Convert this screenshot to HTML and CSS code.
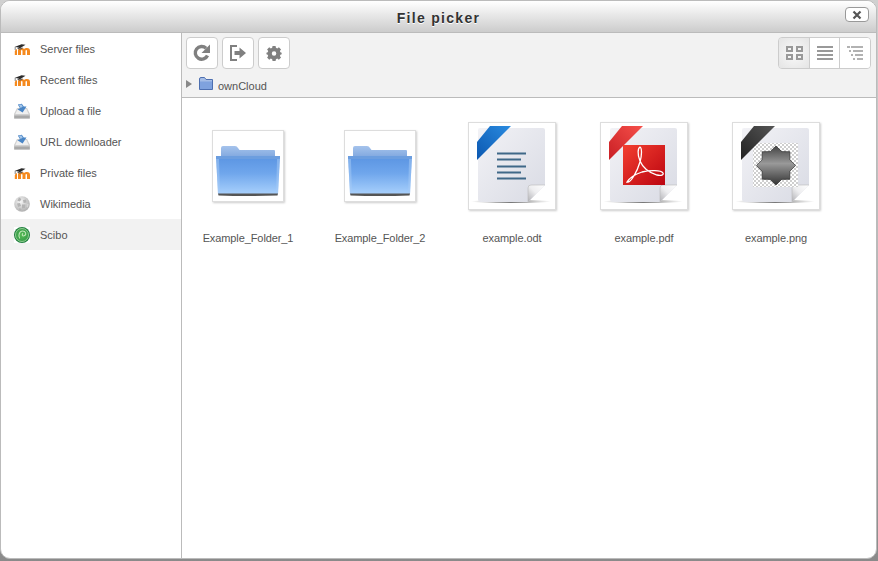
FILE: index.html
```html
<!DOCTYPE html>
<html lang="en">
<head>
    <meta charset="UTF-8">
    <meta name="viewport" content="width=device-width, initial-scale=1.0">
    <title>File picker</title>
    <link rel="stylesheet" href="styles.css">
</head>
<body>

    <svg class="defs" width="0" height="0">
        <defs>
            <linearGradient id="folder-front" x1="0" y1="0" x2="0" y2="1">
                <stop offset="0" stop-color="#5a94e2"/>
                <stop offset="0.45" stop-color="#6fa6ec"/>
                <stop offset="1" stop-color="#a8d0fc"/>
            </linearGradient>
            <linearGradient id="folder-tab" x1="0" y1="0" x2="0" y2="1">
                <stop offset="0" stop-color="#a5c3ec"/>
                <stop offset="1" stop-color="#7ea6de"/>
            </linearGradient>
            <linearGradient id="page" x1="0" y1="0" x2="1" y2="1">
                <stop offset="0" stop-color="#f2f2f6"/>
                <stop offset="1" stop-color="#d9dbe4"/>
            </linearGradient>
            <linearGradient id="fold" x1="0" y1="1" x2="1" y2="0">
                <stop offset="0" stop-color="#b0b0b4"/>
                <stop offset="0.5" stop-color="#eeeef0"/>
                <stop offset="1" stop-color="#fff"/>
            </linearGradient>
            <linearGradient id="under" x1="0" y1="0" x2="1" y2="0">
                <stop offset="0" stop-color="#888" stop-opacity="0"/>
                <stop offset="0.5" stop-color="#777"/>
                <stop offset="1" stop-color="#888" stop-opacity="0"/>
            </linearGradient>
            <linearGradient id="ribbon-blue" x1="0" y1="1" x2="1" y2="0">
                <stop offset="0" stop-color="#0b57b0"/>
                <stop offset="1" stop-color="#2a8be0"/>
            </linearGradient>
            <linearGradient id="ribbon-red" x1="0" y1="1" x2="1" y2="0">
                <stop offset="0" stop-color="#c81e24"/>
                <stop offset="1" stop-color="#f6504a"/>
            </linearGradient>
            <linearGradient id="ribbon-black" x1="0" y1="1" x2="1" y2="0">
                <stop offset="0" stop-color="#222"/>
                <stop offset="1" stop-color="#555"/>
            </linearGradient>
            <linearGradient id="pdf-red" x1="0" y1="0" x2="1" y2="1">
                <stop offset="0" stop-color="#f33f30"/>
                <stop offset="1" stop-color="#bb0510"/>
            </linearGradient>
            <linearGradient id="star" x1="0" y1="0" x2="0" y2="1">
                <stop offset="0" stop-color="#444"/>
                <stop offset="0.45" stop-color="#999"/>
                <stop offset="1" stop-color="#333"/>
            </linearGradient>
            <pattern id="checker" width="4" height="4" patternUnits="userSpaceOnUse">
                <rect width="4" height="4" fill="#fff"/>
                <rect width="2" height="2" fill="#cfcfcf"/>
                <rect x="2" y="2" width="2" height="2" fill="#cfcfcf"/>
            </pattern>
            <radialGradient id="globe" cx="0.4" cy="0.35" r="0.75">
                <stop offset="0" stop-color="#f8f8f8"/>
                <stop offset="1" stop-color="#a6a6a6"/>
            </radialGradient>
            <radialGradient id="green" cx="0.5" cy="0.5" r="0.5">
                <stop offset="0" stop-color="#58bb55"/>
                <stop offset="0.75" stop-color="#3aa04a"/>
                <stop offset="1" stop-color="#17763a"/>
            </radialGradient>

            <symbol id="icon-moodle" viewBox="0 0 16 16">
                <path d="M4 14V9.500Q4 7 7 7H8Q9.500 7 10 8Q11 7 12.500 7H13Q16 7 16 10V14H13V10Q13 9 12.250 9Q11.500 9 11.500 10V14H8.500V10Q8.500 9 7.750 9Q7 9 7 10V14Z" fill="#f58a1f"/>
                <path d="M.8 14V10.500Q.8 8.500 3 8V14Z" fill="#f58a1f"/>
                <path d="M.5 6 7.500 3.200 11.500 3.800 6 7.200 3.500 6.300Z" fill="#2b2b2b"/>
                <path d="M3.500 6.500 6 7.500 8.500 6.200V7.600L6 8.800 3.500 7.800Z" fill="#5a5a5a"/>
                <path d="M1.200 6V9" stroke="#666" stroke-width=".8" fill="none"/>
            </symbol>
            <symbol id="icon-upload" viewBox="0 0 16 16">
                <path d="M3 5H13L16 11V15.500H0V11Z" fill="#d0d0d0"/>
                <path d="M3.600 6H12.400L14.600 11H1.400Z" fill="#efefef"/>
                <path d="M.3 12.500H15.700V15.500H.3Z" fill="#a8a8a8"/>
                <path d="M3.800 1.500 7.800 .8 9.800 3.400 12.500 3.600 8.600 9.600 3.400 6.200 6 5.200Z" fill="#4a86c6"/>
                <path d="M4.800 1.800 7.400 1.400 8.800 3.600 6.600 5Z" fill="#a6c6e8"/>
            </symbol>
            <symbol id="icon-wiki" viewBox="0 0 16 16">
                <circle cx="8" cy="8" r="7.800" fill="url(#globe)"/>
                <path d="M5 1.600 7.400 3 6 5.400 3.400 4.800ZM9 4 12 3.400 12.600 6.400 9.600 7ZM3 7.400 6 7 7 10 4 11ZM8 8.600 11.400 8.400 11 12 8 12.400ZM5.400 12 7.400 13 7 15 5 14.200Z" fill="#b4b4b4"/>
                <path d="M13 8 14.600 8 14 11.600 12.600 11Z" fill="#d4d4d4"/>
            </symbol>
            <symbol id="icon-scibo" viewBox="0 0 16 16">
                <rect width="16" height="16" fill="#fff"/>
                <circle cx="8" cy="8" r="8" fill="url(#green)"/>
                <circle cx="8" cy="8" r="6.500" fill="none" stroke="#a9d9a4" stroke-width=".8"/>
                <path d="M5.800 11.500C3.800 8.800 5.400 4 8.600 4S12.800 7.500 10.600 8.600 7.800 7.800 8.800 6.200" fill="none" stroke="#bfe6b8" stroke-width="1.100"/>
            </symbol>
            <symbol id="icon-folder-thumb" viewBox="1 1 70 70">
                <path d="M9 18Q9 16 11 16H23Q25 16 26 18L27.500 20H62Q63 20 63 21V28H9Z" fill="url(#folder-tab)"/>
                <path d="M4 26H68L66 64H6Z" fill="url(#folder-front)"/>
                <path d="M4 26H68L67.800 29H4.200Z" fill="#6c9edf"/>
                <path d="M4.300 29H7L8 64H6ZM67.700 29H65L64 64H66Z" fill="#a8ccf6" opacity=".5"/>
                <path d="M6 63.500H66L65.500 65.500Q36 66.500 6.500 65.500Z" fill="#555"/>
            </symbol>
            <symbol id="icon-doc" viewBox="1 1 86 86">
                <ellipse cx="43" cy="79.500" rx="40" ry="1.500" fill="url(#under)"/>
                <path d="M12 6H75Q77 6 77 8V63L60 80H13Q10 80 10 77V8Q10 6 12 6Z" fill="url(#page)"/>
                <path d="M60 80V67Q60 63 64 63H77Z" fill="url(#fold)"/>
                <path d="M60 80V66Q60 63 63 63H77" fill="none" stroke="#bbb" stroke-width=".6"/>
            </symbol>
        </defs>
    </svg>

    <div class="dialog">
        <div class="dialog-header">
            <h1>File picker</h1>
            <button class="close-btn">
                <svg width="10" height="10" viewBox="0 0 10 10"><path d="M1.500 1.500 8.500 8.500M8.500 1.500 1.500 8.500" stroke="#555" stroke-width="2.200" fill="none"/></svg>
            </button>
        </div>

        <div class="dialog-body">
            <ul class="sources">
                <li><svg class="source-icon"><use href="#icon-moodle"/></svg>Server files</li>
                <li><svg class="source-icon"><use href="#icon-moodle"/></svg>Recent files</li>
                <li><svg class="source-icon"><use href="#icon-upload"/></svg>Upload a file</li>
                <li><svg class="source-icon"><use href="#icon-upload"/></svg>URL downloader</li>
                <li><svg class="source-icon"><use href="#icon-moodle"/></svg>Private files</li>
                <li><svg class="source-icon"><use href="#icon-wiki"/></svg>Wikimedia</li>
                <li class="active"><svg class="source-icon"><use href="#icon-scibo"/></svg>Scibo</li>
            </ul>

            <div class="main">
                <div class="toolbar">
                    <div class="toolbar-row">
                        <div class="actions">
                            <button class="tool-btn">
                                <svg width="20" height="20" viewBox="0 0 20 20"><path d="M15.500 12.500A6.400 6.400 0 1 1 14.100 5.200" fill="none" stroke="#808080" stroke-width="3.400"/><path d="M18 1.500V10H9.500Z" fill="#808080"/></svg>
                            </button>
                            <button class="tool-btn">
                                <svg width="20" height="20" viewBox="0 0 20 20"><path d="M9 3H3V17H9" fill="none" stroke="#808080" stroke-width="2"/><path d="M6.500 8H11.500V4.500L18 10 11.500 15.500V12H6.500Z" fill="#808080"/></svg>
                            </button>
                            <button class="tool-btn">
                                <svg width="17" height="17" viewBox="1 1 19 19"><path fill="#808080" fill-rule="evenodd" d="M8.300 2H11.700L12.100 4.200 13.600 4.800 15.400 3.500 17.800 5.900 16.500 7.700 17.100 9.200 18.500 9.600V11.400L17.100 11.800 16.500 13.300 17.800 15.100 15.400 17.500 13.600 16.200 12.100 16.800 11.700 19H8.300L7.900 16.800 6.400 16.200 4.600 17.500 2.200 15.100 3.500 13.300 2.900 11.800 1.500 11.400V9.600L2.900 9.200 3.500 7.700 2.200 5.900 4.600 3.500 6.400 4.800 7.900 4.200ZM10 8A2.500 2.500 0 1 0 10 13 2.500 2.500 0 1 0 10 8Z"/></svg>
                            </button>
                        </div>
                        <div class="views">
                            <button class="view-btn selected">
                                <svg width="17" height="14" viewBox="0 0 17 14"><path d="M1 1H6V5H1ZM11 1H16V5H11ZM1 9H6V13H1ZM11 9H16V13H11Z" fill="none" stroke="#999" stroke-width="2"/></svg>
                            </button>
                            <button class="view-btn">
                                <svg width="16" height="14" viewBox="0 0 16 14"><path d="M0 1H16M0 5H16M0 9H16M0 13H16" stroke="#999" stroke-width="2"/></svg>
                            </button>
                            <button class="view-btn">
                                <svg width="16" height="14" viewBox="0 0 16 14"><path d="M0 1H3M4 1H16M2 5H4M6 5H16M4 9H6M8 9H16M6 13H8M10 13H16" stroke="#999" stroke-width="1.600"/></svg>
                            </button>
                        </div>
                    </div>
                    <div class="path">
                        <span class="path-arrow"></span>
                        <svg class="path-folder" width="14" height="13" viewBox="0 0 14 13"><path d="M.5 2Q.5 .5 2 .5H5.500L7 2.500H13.500V12.500H.5Z" fill="#a5bde6" stroke="#4d6fb0"/><path d="M1 4.500H13V12H1Z" fill="#7fa2de"/></svg>
                        <span>ownCloud</span>
                    </div>
                </div>

                <div class="files">
                    <div class="file">
                        <div class="thumb-wrap">
                            <svg class="thumb small"><use href="#icon-folder-thumb"/></svg>
                        </div>
                        <div class="file-name">Example_Folder_1</div>
                    </div>
                    <div class="file">
                        <div class="thumb-wrap">
                            <svg class="thumb small"><use href="#icon-folder-thumb"/></svg>
                        </div>
                        <div class="file-name">Example_Folder_2</div>
                    </div>
                    <div class="file">
                        <div class="thumb-wrap">
                            <svg class="thumb" viewBox="1 1 86 86">
                                <use x="1" y="1" width="86" height="86" href="#icon-doc"/>
                                <path d="M22 4H43L9 38V20Z" fill="url(#ribbon-blue)"/>
                                <path d="M29 31.500H58M29 37.500H53M29 44.500H58M29 50.500H53M29 56.500H58" stroke="#3f6888" stroke-width="2"/>
                            </svg>
                        </div>
                        <div class="file-name">example.odt</div>
                    </div>
                    <div class="file">
                        <div class="thumb-wrap">
                            <svg class="thumb" viewBox="1 1 86 86">
                                <use x="1" y="1" width="86" height="86" href="#icon-doc"/>
                                <path d="M22 4H43L9 38V20Z" fill="url(#ribbon-red)"/>
                                <rect x="23" y="23" width="42" height="40" fill="url(#pdf-red)"/>
                                <path d="M28 60C31 60 37 50 40 40 42 33 42 26 40 25 38 26 37 32 40 39 43 46 50 51 57 53 61 54 64 53 63 51 61 48 50 48 42 50 36 52 30 55 27 60Z" fill="none" stroke="#fff" stroke-width="1.300"/>
                            </svg>
                        </div>
                        <div class="file-name">example.pdf</div>
                    </div>
                    <div class="file">
                        <div class="thumb-wrap">
                            <svg class="thumb" viewBox="1 1 86 86">
                                <use x="1" y="1" width="86" height="86" href="#icon-doc"/>
                                <rect x="21" y="21" width="45" height="44" fill="url(#checker)"/>
                                <path d="M22 4H43L9 38V20Z" fill="url(#ribbon-black)"/>
                                <path d="M44 24 49.700 29.600 57.800 29.700 57.900 37.800 63.500 43.500 57.900 49.200 57.800 57.300 49.700 57.400 44 63 38.300 57.400 30.200 57.300 30.100 49.200 24.500 43.500 30.100 37.800 30.200 29.700 38.300 29.600Z" fill="url(#star)" stroke="#222" stroke-width=".6"/>
                            </svg>
                        </div>
                        <div class="file-name">example.png</div>
                    </div>
                </div>
            </div>
        </div>
    </div>

</body>
</html>
```

FILE: styles.css
```css
html, body {
    margin: 0;
    height: 100%;
}

body {
    background: linear-gradient(#d0d0d0, #b0b0b0 60%, #8a8a8a);
    font-family: "Liberation Sans", Arial, sans-serif;
    font-size: 11px;
    color: #555;
    overflow: hidden;
}

.defs {
    display: block;
    height: 0;
}

.dialog {
    width: 875px;
    height: 557px;
    display: flex;
    flex-direction: column;
    background-color: #fff;
    border: 1px solid #bbb;
    border-radius: 10px;
    overflow: hidden;
}

.dialog-header {
    height: 31px;
    flex: none;
    position: relative;
    display: flex;
    align-items: center;
    justify-content: center;
    background: linear-gradient(#fff, #ccc);
    border-bottom: 1px solid #bbb;
}

h1 {
    margin: 2px 0 0;
    font-size: 14px;
    font-weight: bold;
    letter-spacing: 1.3px;
    color: #333;
    text-shadow: 0 1px 0 #fff;
}

.close-btn {
    position: absolute;
    top: 6px;
    right: 7px;
    width: 24px;
    height: 15px;
    padding: 0;
    display: flex;
    align-items: center;
    justify-content: center;
    background-color: #fff;
    border: 1px solid #999;
    border-radius: 4px;
}

.dialog-body {
    flex: 1;
    display: flex;
    min-height: 0;
}

.sources {
    width: 180px;
    flex: none;
    margin: 0;
    padding: 0;
    list-style: none;
    border-right: 1px solid #bbb;
}

.sources li {
    height: 31px;
    display: flex;
    align-items: center;
    padding-left: 13px;
    gap: 10px;
    white-space: nowrap;
}

.sources li.active {
    background-color: #f2f2f2;
}

.source-icon {
    width: 16px;
    height: 16px;
    flex: none;
}

.main {
    flex: 1;
    display: flex;
    flex-direction: column;
    min-width: 0;
}

.toolbar {
    height: 65px;
    flex: none;
    box-sizing: border-box;
    padding: 4px 5px 0 4px;
    background-color: #f2f2f2;
    border-bottom: 1px solid #bbb;
}

.toolbar-row {
    display: flex;
    justify-content: space-between;
}

.actions {
    display: flex;
    gap: 4px;
}

button {
    font: inherit;
}

.tool-btn {
    width: 32px;
    height: 32px;
    padding: 0;
    display: flex;
    align-items: center;
    justify-content: center;
    background-color: #fff;
    border: 1px solid #ccc;
    border-radius: 4px;
}

.views {
    display: flex;
    border: 1px solid #ccc;
    border-radius: 4px;
    overflow: hidden;
}

.view-btn {
    width: 30px;
    height: 30px;
    padding: 0;
    display: flex;
    align-items: center;
    justify-content: center;
    background-color: #fff;
    border: 0;
    border-left: 1px solid #ccc;
}

.view-btn:first-child {
    border-left: 0;
}

.view-btn:last-child {
    width: 31px;
}

.view-btn.selected {
    background: radial-gradient(circle at center, #fafafa, #e4e4e4);
}

.path {
    display: flex;
    align-items: center;
    margin-top: 9px;
    height: 16px;
    color: #555;
}

.path-arrow {
    width: 0;
    height: 0;
    margin: 0 7px 4px 0;
    border-left: 6px solid #888;
    border-top: 4px solid transparent;
    border-bottom: 4px solid transparent;
}

.path-folder {
    margin-bottom: 6px;
}

.path span:last-child {
    margin-left: 5px;
}

.files {
    flex: 1;
    display: flex;
    align-items: flex-start;
    padding-top: 18px;
}

.file {
    width: 132px;
    text-align: center;
}

.thumb-wrap {
    height: 100px;
    display: flex;
    align-items: center;
    justify-content: center;
}

.thumb {
    width: 86px;
    height: 86px;
    box-sizing: content-box;
    background-color: #fff;
    border: 1px solid #ddd;
    box-shadow: 1px 1px 2px #ccc;
}

.thumb.small {
    width: 70px;
    height: 70px;
}

.file-name {
    margin-top: 15px;
    line-height: 14px;
    letter-spacing: -.1px;
}
```
